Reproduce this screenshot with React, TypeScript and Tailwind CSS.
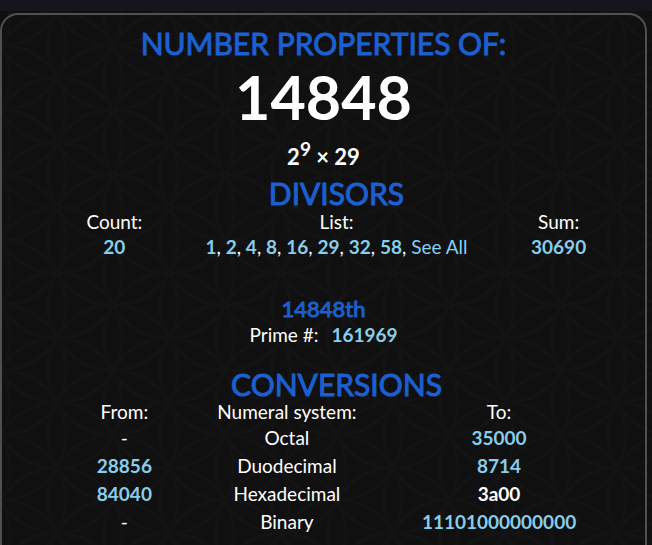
import type { ReactNode } from "react";

interface Conversion {
  from: string | null;
  system: string;
  to: string;
  current?: boolean;
}

const divisors = ["1", "2", "4", "8", "16", "29", "32", "58"];

const conversions: Conversion[] = [
  { from: null, system: "Octal", to: "35000" },
  { from: "28856", system: "Duodecimal", to: "8714" },
  { from: "84040", system: "Hexadecimal", to: "3a00", current: true },
  { from: null, system: "Binary", to: "11101000000000" },
];

function NumberLink({ children }: { children: ReactNode }) {
  return (
    <a href="#" className="font-bold text-[#87ceeb] hover:underline">
      {children}
    </a>
  );
}

function SectionTitle({ children }: { children: ReactNode }) {
  return (
    <h2 className="text-[30px] leading-[32px] text-[#1b5fd0] [-webkit-text-stroke:1px_#1b5fd0]">{children}</h2>
  );
}

// Overlapping circles on a triangular grid
function FlowerPattern() {
  return (
    <svg className="absolute inset-0 w-full h-full" aria-hidden="true">
      <defs>
        <pattern id="flower" width="112" height="65" x="1" y="13" patternUnits="userSpaceOnUse">
          <g fill="none" stroke="#131313" strokeWidth="3">
            {[-56, 0, 56, 112, 168].map((x, i) =>
              [-65, 0, 65, 130].map((y) => (
                <circle key={`${x}-${y}`} cx={x} cy={i % 2 ? y + 32 : y} r="65" />
              ))
            )}
          </g>
        </pattern>
      </defs>
      <rect width="100%" height="100%" fill="url(#flower)" />
    </svg>
  );
}

export default function App() {
  return (
    <div className="relative min-h-screen overflow-hidden bg-[#101010] font-['Lato',sans-serif] text-[19px] leading-[25px] text-white">
      <FlowerPattern />
      <div className="relative h-[11px] bg-[#15151b]" />

      <main className="relative mt-[2px] mr-[5px] min-h-screen rounded-t-[18px] border-2 border-[#505050] pt-[8px] text-center">
        <h1>
          <span className="block text-[30px] leading-[40px] text-[#1b5fd0] [-webkit-text-stroke:1px_#1b5fd0]">
            NUMBER PROPERTIES OF:
          </span>
          <span className="block text-[61px] leading-[68px] font-bold">14848</span>
        </h1>
        <p className="mt-[10px] text-[22px] leading-[32px] font-bold">
          2<sup className="text-[19px]">9</sup> × 29
        </p>

        {/* Divisors */}
        <section className="mt-[4px] pl-[26px]">
          <SectionTitle>DIVISORS</SectionTitle>
          <table className="w-full table-fixed whitespace-nowrap">
            <thead>
              <tr>
                <th className="w-[28%] font-normal">Count:</th>
                <th className="w-[44%] font-normal">List:</th>
                <th className="w-[28%] font-normal">Sum:</th>
              </tr>
            </thead>
            <tbody>
              <tr>
                <td><NumberLink>20</NumberLink></td>
                <td>
                  {divisors.map((n) => (
                    <span key={n}><NumberLink>{n}</NumberLink>, </span>
                  ))}
                  <a href="#" className="text-[#87cefa] hover:underline">See All</a>
                </td>
                <td><NumberLink>30690</NumberLink></td>
              </tr>
            </tbody>
          </table>
        </section>

        {/* Nth prime */}
        <section className="mt-[36px]">
          <h3 className="text-[22px] leading-[27px] text-[#1b5fd0] [-webkit-text-stroke:1px_#1b5fd0]">14848th</h3>
          <p>
            Prime #: <span className="ml-2"><NumberLink>161969</NumberLink></span>
          </p>
        </section>

        {/* Conversions */}
        <section className="mt-[21px]">
          <div className="pl-[26px]">
            <SectionTitle>CONVERSIONS</SectionTitle>
          </div>
          <div className="pr-[33px] pl-[59px]">
            <table className="w-full table-fixed whitespace-nowrap">
              <thead className="leading-[24px]">
                <tr>
                  <th className="w-[23%] font-normal">From:</th>
                  <th className="w-[36%] font-normal">Numeral system:</th>
                  <th className="w-[41%] font-normal">To:</th>
                </tr>
              </thead>
              <tbody className="leading-[28px]">
                {conversions.map((c) => (
                  <tr key={c.system}>
                    <td>{c.from ? <NumberLink>{c.from}</NumberLink> : "-"}</td>
                    <td>{c.system}</td>
                    <td>{c.current ? <b>{c.to}</b> : <NumberLink>{c.to}</NumberLink>}</td>
                  </tr>
                ))}
              </tbody>
            </table>
          </div>
        </section>
      </main>
    </div>
  );
}
